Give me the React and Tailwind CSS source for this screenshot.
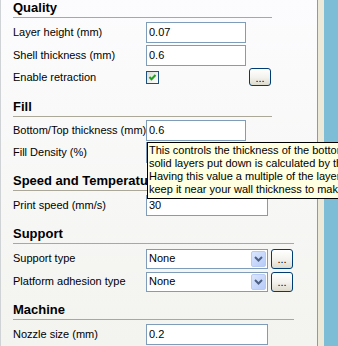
import React from "react";

const font = { fontFamily: '"Liberation Sans", Arial, sans-serif' };

function Heading({ children, wide }) {
  return (
    <div
      className={`h-[18px] border-b border-[#aca899] font-bold text-[13px] leading-[16px] text-black ${
        wide ? "w-[281px]" : "w-[259px]"
      }`}
    >
      {children}
    </div>
  );
}

function Row({ label, children, tall }) {
  return (
    <div className={`flex items-center ${tall ? "h-[23px]" : "h-[22px]"}`}>
      <div className="w-[133px] whitespace-nowrap">{label}</div>
      {children}
    </div>
  );
}

function Field({ value, wide }) {
  return (
    <div
      className={`h-[21px] ${
        wide ? "w-[122px]" : "w-[100px]"
      } border border-[#7f9db9] bg-white flex items-center pl-[2px] leading-none`}
    >
      {value}
    </div>
  );
}

function DotsButton({ className }) {
  return (
    <div
      className={`w-[22px] border border-[#003c74] rounded-[3px] bg-linear-to-b from-white via-[#f4f3ee] to-[#dedbcd] flex items-center justify-center text-[11px] leading-none pt-[2px] ${className}`}
    >
      ...
    </div>
  );
}

function Combo({ value }) {
  return (
    <div className="h-[20px] w-[122px] border border-[#7f9db9] bg-white flex items-center">
      <div className="flex-1 pl-[2px] leading-none">{value}</div>
      <div className="w-[15px] h-[16px] mr-[1px] rounded-[2px] border border-[#b9cbf3] bg-linear-to-br from-[#dbe6fd] to-[#b6cbf8] flex items-center justify-center">
        <svg width="9" height="6" viewBox="0 0 9 6">
          <polyline
            points="1,1 4.5,4.5 8,1"
            fill="none"
            stroke="#4d6185"
            strokeWidth="2"
          />
        </svg>
      </div>
    </div>
  );
}

function Checkbox() {
  return (
    <div className="w-[13px] h-[13px] border border-[#1c5180] bg-linear-to-br from-[#dcdcd7] to-white flex items-center justify-center">
      <svg width="11" height="11" viewBox="0 0 11 11">
        <polyline
          points="2.5,5 4.5,7.3 8.5,3"
          fill="none"
          stroke="#21a121"
          strokeWidth="2"
        />
      </svg>
    </div>
  );
}

export default function App() {
  return (
    <div
      className="w-[338px] h-[346px] overflow-hidden relative flex text-[11px] text-black"
      style={font}
    >
      <div className="w-[318px] h-full border-l border-[#cfd3d6] border-r border-r-[#919b9c] bg-linear-to-b from-[#fcfcfe] to-[#f3f3ef] pl-[12px]">
        <Heading>Quality</Heading>
        <div className="mt-[3px]">
          <Row label="Layer height (mm)" tall>
            <Field value="0.07" />
          </Row>
          <Row label="Shell thickness (mm)" tall>
            <Field value="0.6" />
          </Row>
          <div className="flex items-center h-[20px]">
            <div className="w-[133px] whitespace-nowrap">Enable retraction</div>
            <Checkbox />
            <DotsButton className="h-[18px] ml-[90px]" />
          </div>
        </div>

        <div className="mt-[12px]">
          <Heading>Fill</Heading>
          <div className="mt-[2px]">
            <Row label="Bottom/Top thickness (mm)">
              <Field value="0.6" />
            </Row>
            <Row label="Fill Density (%)">
              <Field value="" />
            </Row>
          </div>
        </div>

        <div className="mt-[10px]">
          <Heading>Speed and Temperature</Heading>
          <div className="mt-[3px]">
            <Row label="Print speed (mm/s)">
              <Field value="30" wide />
            </Row>
          </div>
        </div>

        <div className="mt-[10px]">
          <Heading wide>Support</Heading>
          <div className="mt-[3px]">
            <Row label="Support type" tall>
              <Combo value="None" />
              <DotsButton className="h-[20px] ml-[3px]" />
            </Row>
            <Row label="Platform adhesion type" tall>
              <Combo value="None" />
              <DotsButton className="h-[20px] ml-[3px]" />
            </Row>
          </div>
        </div>

        <div className="mt-[9px]">
          <Heading wide>Machine</Heading>
          <div className="mt-[3px]">
            <Row label="Nozzle size (mm)">
              <Field value="0.2" wide />
            </Row>
          </div>
        </div>
      </div>
      <div className="w-[6px] h-full bg-[#ece9d8]" />
      <div className="flex-1 h-full bg-[#7dbdd6]" />

      <div className="absolute left-[147px] top-[142px] w-[320px] bg-[#ffffe1] border border-black pl-[1px] pt-[1px] pb-[2px] leading-[13px] whitespace-nowrap">
        <div>This controls the thickness of the bottom and top layers, the amount of</div>
        <div>solid layers put down is calculated by the layer thickness and this value.</div>
        <div>Having this value a multiple of the layer thickness makes sense. And</div>
        <div>keep it near your wall thickness to make an evenly strong part.</div>
      </div>
    </div>
  );
}
